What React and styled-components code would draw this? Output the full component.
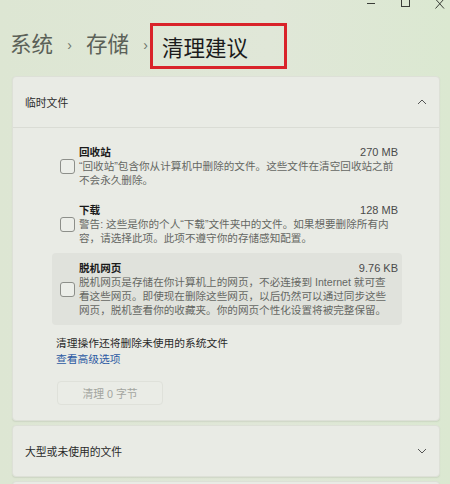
import React from "react";
import styled, { createGlobalStyle } from "styled-components";

const GlobalStyle = createGlobalStyle`
  html, body {
    margin: 0;
    padding: 0;
  }
  body {
    background: linear-gradient(90deg, #dde6d3 0%, #e0e7d8 60%, #dbe8d1 100%);
    font-family: "Liberation Sans", "Noto Sans CJK SC", sans-serif;
    color: #1b1b1b;
    width: 450px;
    height: 484px;
    overflow: hidden;
  }
`;

const Page = styled.div`
  display: flex;
  flex-direction: column;
  width: 450px;
  height: 484px;
  overflow: hidden;
`;

const TitleBar = styled.div`
  display: flex;
  justify-content: flex-end;
  align-items: flex-start;
  gap: 24px;
  height: 12px;
  padding-right: 4px;
  color: #3a3d38;
`;

const Breadcrumb = styled.div`
  display: flex;
  align-items: center;
  height: 46px;
  margin-top: 13px;
  padding-left: 10px;
  font-size: 21.5px;
`;

const Crumb = styled.span`
  color: #5b6158;
  line-height: 1;
`;

const Sep = styled.span`
  color: #70766d;
  font-size: 14px;
  width: 33px;
  text-align: center;
  padding-bottom: 2px;
`;

const Highlight = styled.span`
  display: flex;
  align-items: center;
  box-sizing: border-box;
  margin-left: -12px;
  width: 137px;
  height: 46px;
  padding-left: 9px;
  border: 3px solid #d9232a;
  color: #1b1b1b;
`;

const Panels = styled.div`
  display: flex;
  flex-direction: column;
  gap: 4px;
  margin-top: 7px;
  padding: 0 10px 0 12px;
`;

const Panel = styled.section`
  background: #e9ebe5;
  border: 1px solid #dde0d7;
  border-radius: 4px;
  box-shadow: 0 1px 1px rgba(160, 170, 150, 0.25);
`;

const Header = styled.div`
  display: flex;
  align-items: center;
  justify-content: space-between;
  height: ${(p) => p.$h}px;
  padding: 0 12px;
  font-size: 10.8px;
  color: #2a2a2a;
  border-bottom: ${(p) => (p.$open ? "1px solid #dadcd5" : "none")};
`;

const Body = styled.div`
  display: flex;
  flex-direction: column;
  padding: 9px 37px 15px 39px;
`;

const Item = styled.div`
  display: flex;
  align-items: center;
  gap: 4px;
  padding: 8px 4px 8px 8px;
  border-radius: 4px;
  background: ${(p) => (p.$active ? "#e0e2dc" : "transparent")};
`;

const Check = styled.span`
  flex: none;
  box-sizing: border-box;
  width: 15px;
  height: 15px;
  border: 1px solid #8d8f8a;
  border-radius: 3px;
  background: #eceee9;
`;

const ItemText = styled.div`
  flex: 1;
  display: flex;
  flex-direction: column;
  font-size: 10.6px;
  line-height: 14px;
`;

const ItemHead = styled.div`
  display: flex;
  justify-content: space-between;
`;

const ItemTitle = styled.span`
  font-weight: bold;
  color: #1a1a1a;
`;

const Size = styled.span`
  color: #4a4a4a;
  font-size: 11px;
`;

const Desc = styled.span`
  color: #656763;
  white-space: nowrap;
`;

const Note = styled.div`
  margin-top: 10px;
  padding-left: 4px;
  font-size: 10.75px;
  line-height: 16px;
  color: #2a2a2a;
`;

const Link = styled.a`
  color: #2c5aa3;
  text-decoration: none;
`;

const Button = styled.button`
  margin: 14px 0 0 5px;
  width: 106px;
  height: 24px;
  border: 1px solid #dfe1da;
  border-radius: 4px;
  background: #eaece6;
  color: #a3a5a0;
  font-family: inherit;
  font-size: 10.8px;
`;

const Chevron = ({ up }) => (
  <svg width="10" height="6" viewBox="0 0 10 6">
    <path
      d={up ? "M1 5 L5 1 L9 5" : "M1 1 L5 5 L9 1"}
      fill="none"
      stroke="#555"
      strokeWidth="1"
    />
  </svg>
);

const items = [
  {
    title: "回收站",
    size: "270 MB",
    lines: [
      "“回收站”包含你从计算机中删除的文件。这些文件在清空回收站之前",
      "不会永久删除。",
    ],
  },
  {
    title: "下载",
    size: "128 MB",
    lines: [
      "警告: 这些是你的个人“下载”文件夹中的文件。如果想要删除所有内",
      "容，请选择此项。此项不遵守你的存储感知配置。",
    ],
  },
  {
    title: "脱机网页",
    size: "9.76 KB",
    active: true,
    lines: [
      "脱机网页是存储在你计算机上的网页，不必连接到 Internet 就可查",
      "看这些网页。即使现在删除这些网页，以后仍然可以通过同步这些",
      "网页，脱机查看你的收藏夹。你的网页个性化设置将被完整保留。",
    ],
  },
];

export default function App() {
  return (
    <Page>
      <GlobalStyle />
      <TitleBar>
        <svg width="10" height="10" viewBox="0 0 10 10">
          <path d="M1 3.5 H9" stroke="#3a3d38" strokeWidth="1" />
        </svg>
        <svg width="10" height="10" viewBox="0 0 10 10">
          <rect x="1.5" y="-3" width="8" height="9.5" fill="none" stroke="#3a3d38" strokeWidth="1" />
        </svg>
        <svg width="12" height="10" viewBox="0 0 12 10">
          <path d="M1.5 -1 L10 8.5 M10 -1 L1.5 8.5" stroke="#3a3d38" strokeWidth="1" />
        </svg>
      </TitleBar>
      <Breadcrumb>
        <Crumb>系统</Crumb>
        <Sep>›</Sep>
        <Crumb>存储</Crumb>
        <Sep>›</Sep>
        <Highlight>清理建议</Highlight>
      </Breadcrumb>
      <Panels>
        <Panel>
          <Header $h={50} $open>
            <span>临时文件</span>
            <Chevron up />
          </Header>
          <Body>
            {items.map((it) => (
              <Item key={it.title} $active={it.active}>
                <Check />
                <ItemText>
                  <ItemHead>
                    <ItemTitle>{it.title}</ItemTitle>
                    <Size>{it.size}</Size>
                  </ItemHead>
                  {it.lines.map((l) => (
                    <Desc key={l}>{l}</Desc>
                  ))}
                </ItemText>
              </Item>
            ))}
            <Note>
              清理操作还将删除未使用的系统文件
              <br />
              <Link href="#">查看高级选项</Link>
            </Note>
            <div>
              <Button disabled>清理 0 字节</Button>
            </div>
          </Body>
        </Panel>
        <Panel>
          <Header $h={50}>
            <span>大型或未使用的文件</span>
            <Chevron />
          </Header>
        </Panel>
        <Panel>
          <Header $h={50} />
        </Panel>
      </Panels>
    </Page>
  );
}
